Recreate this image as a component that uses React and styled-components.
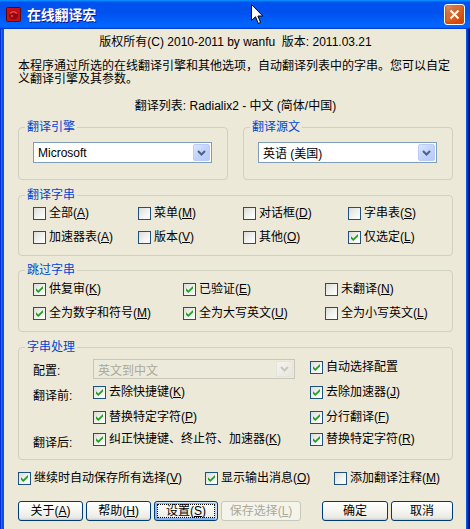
import React from 'react'
import styled, { createGlobalStyle } from 'styled-components'

const GlobalStyle = createGlobalStyle`
  html, body {
    margin: 0;
    padding: 0;
    background: #ECE9D8;
  }
  body {
    font-family: "Liberation Sans", "Noto Sans CJK SC", sans-serif;
    font-size: 12px;
    color: #000;
  }
`

const Window = styled.div`
  position: relative;
  width: 470px;
  height: 529px;
  box-sizing: border-box;
  display: flex;
  flex-direction: column;
  overflow: hidden;
  background: #0855DD;
  box-shadow: inset 1px 0 #0831D9, inset 2px 0 #166AEE, inset 3px 0 #0855DD,
    inset -1px 0 #00138C, inset -2px 0 #001EA0, inset -3px 0 #003BDA;
`

const TitleBar = styled.div`
  flex: none;
  height: 29px;
  display: flex;
  align-items: center;
  gap: 6px;
  padding: 0 5px 0 6px;
  background: linear-gradient(180deg, #0997FF, #0053EE 8%, #0050EE 40%, #0066FF 88%, #0066FF 93%, #005BFF 95%, #003DD7 96%, #003DD7);
`

const Title = styled.span`
  flex: 1;
  color: #fff;
  font-weight: bold;
  font-size: 14px;
  letter-spacing: -0.2px;
  text-shadow: 1px 1px #0F1089;
  line-height: 16px;
`

const CloseButton = styled.span`
  width: 21px;
  height: 21px;
  box-sizing: border-box;
  border: 1px solid #fff;
  border-radius: 3px;
  display: flex;
  align-items: center;
  justify-content: center;
  background: radial-gradient(circle at 90% 90%, #CC4600 0%, #DC6527 55%, #CD7546 70%, #E5A07E 100%);
  box-shadow: inset 0 -1px 2px 1px #DA4600;
`

const Body = styled.div`
  flex: 1;
  margin: 0 4px;
  padding: 6px 13px 0 14px;
  background: #ECE9D8;
`

const Centered = styled.div`
  text-align: center;
  line-height: 14px;
  margin-top: ${p => p.$mt || 0}px;
  white-space: pre;
`

const Para = styled.p`
  margin: 11px 0 0;
  line-height: 13px;
`

const Group = styled.div`
  position: relative;
  border: 1px solid #D0D0BF;
  border-radius: 4px;
  margin-top: ${p => p.$mt || 0}px;
  padding: ${p => p.$pad};
`

const Legend = styled.span`
  position: absolute;
  left: 6px;
  top: -8px;
  padding: 0 2px;
  line-height: 14px;
  color: #0046D5;
  background: #ECE9D8;
`

const EngineRow = styled.div`
  display: grid;
  grid-template-columns: 210px 210px;
  column-gap: 15px;
  margin-top: 14px;
`

const CheckGrid = styled.div`
  display: grid;
  grid-template-columns: ${p => p.$cols};
  row-gap: 8px;
`

const ProcGrid = styled.div`
  display: grid;
  grid-template-columns: 60px 217px 1fr;
  grid-template-rows: 25px 25px 22px 20px;
  & > * {
    height: 20px;
    align-self: start;
  }
`

const RowLabel = styled.span`
  display: flex;
  align-items: center;
`

const CheckRow = styled.label`
  display: flex;
  align-items: center;
  gap: 3px;
  height: 16px;
  white-space: nowrap;
  line-height: 14px;
`

const Box = styled.span`
  flex: none;
  width: 13px;
  height: 13px;
  box-sizing: border-box;
  border: 1px solid #1C5180;
  background: linear-gradient(135deg, #DCDCD7 0%, #F4F4F2 60%, #FFFFFF 100%);
  display: flex;
  align-items: center;
  justify-content: center;
`

const ComboBox = styled.div`
  width: ${p => p.$w}px;
  height: ${p => p.$h || 21}px;
  box-sizing: border-box;
  display: flex;
  align-items: stretch;
  padding: 1px;
  border: 1px solid ${p => (p.$disabled ? '#C9C7BA' : '#7F9DB9')};
  background: ${p => (p.$disabled ? '#EBEADB' : '#fff')};
  color: ${p => (p.$disabled ? '#ACA899' : '#000')};
`

const ComboText = styled.span`
  flex: 1;
  display: flex;
  align-items: center;
  padding-left: 3px;
`

const DropButton = styled.span`
  width: 17px;
  box-sizing: border-box;
  border-radius: 2px;
  display: flex;
  align-items: center;
  justify-content: center;
  border: 1px solid ${p => (p.$disabled ? '#E6E4DA' : '#BACDF8')};
  background: ${p =>
    p.$disabled
      ? 'linear-gradient(135deg, #F4F3EE, #E8E6DD)'
      : 'linear-gradient(135deg, #DCE6FD 0%, #C3D3FD 50%, #B7C9F7 100%)'};
`

const BottomChecks = styled.div`
  display: grid;
  grid-template-columns: 187px 129px 1fr;
  margin-top: 10px;
`

const ButtonBar = styled.div`
  display: flex;
  gap: 3px;
  margin-top: 15px;
`

const Button = styled.button`
  width: ${p => p.$w}px;
  height: 20px;
  box-sizing: border-box;
  margin-left: ${p => p.$ml || 0}px;
  padding: 0;
  font: inherit;
  line-height: 14px;
  color: #000;
  border: 1px solid #003C74;
  border-radius: 3px;
  background: linear-gradient(180deg, #FFFFFF 0%, #F7F7F4 40%, #ECEBE6 85%, #D6D0C5 100%);
  box-shadow: inset 0 -1px #D6D0C5;
  &[data-focus] {
    box-shadow: inset -1px 1px #CEE7FF, inset 1px 2px #98B8EA, inset -2px 2px #BCD4F6,
      inset 1px -1px #89ADE4, inset 2px -2px #89ADE4;
    outline: 1px dotted #000;
    outline-offset: -4px;
  }
  &:disabled {
    color: #ACA899;
    border-color: #C9C7BA;
    background: #F5F4EA;
    box-shadow: none;
  }
`

const Cursor = styled.svg`
  position: absolute;
  left: 251px;
  top: 4px;
`

const Tick = () => (
  <svg width="7" height="7" viewBox="0 0 7 7">
    <polygon points="0,2.2 2.3,4.4 7,0 7,2.6 2.3,7 0,4.8" fill="#21A121" />
  </svg>
)

const Check = ({ checked, children }) => (
  <CheckRow>
    <Box>{checked && <Tick />}</Box>
    <span>{children}</span>
  </CheckRow>
)

const Chevron = ({ color }) => (
  <svg width="9" height="6" viewBox="0 0 9 6">
    <path d="M1 1 L4.5 4.5 L8 1" fill="none" stroke={color} strokeWidth="2" />
  </svg>
)

const Combo = ({ w, h, disabled, children }) => (
  <ComboBox $w={w} $h={h} $disabled={disabled}>
    <ComboText>{children}</ComboText>
    <DropButton $disabled={disabled}>
      <Chevron color={disabled ? '#C9C7BA' : '#4D6185'} />
    </DropButton>
  </ComboBox>
)

const Key = ({ label, k }) => (
  <>
    {label}(<u>{k}</u>)
  </>
)

const AppIcon = () => (
  <svg width="15" height="15" viewBox="0 0 15 15">
    <rect x="0.5" y="0.5" width="14" height="14" rx="1" fill="#C4101A" stroke="#5A0408" />
    <circle cx="7.5" cy="8" r="4.6" fill="#8E0A10" />
    <path d="M4 6.5 Q7.5 3 11 6.5" stroke="#F04848" strokeWidth="1.4" fill="none" />
    <circle cx="6" cy="9" r="1.3" fill="#E83030" />
  </svg>
)

export default function App() {
  return (
    <>
      <GlobalStyle />
      <Window>
        <TitleBar>
          <AppIcon />
          <Title>在线翻译宏</Title>
          <CloseButton>
            <svg width="11" height="11" viewBox="0 0 11 11">
              <path d="M1.5 1.5 L9.5 9.5 M9.5 1.5 L1.5 9.5" stroke="#fff" strokeWidth="2" />
            </svg>
          </CloseButton>
        </TitleBar>
        <Body>
          <Centered>版权所有(C) 2010-2011 by wanfu  版本: 2011.03.21</Centered>
          <Para>本程序通过所选的在线翻译引擎和其他选项，自动翻译列表中的字串。您可以自定义翻译引擎及其参数。</Para>
          <Centered $mt={13}>翻译列表: Radialix2 - 中文 (简体/中国)</Centered>

          <EngineRow>
            <Group $pad="14px 15px 16px 14px">
              <Legend>翻译引擎</Legend>
              <Combo w={179}>Microsoft</Combo>
            </Group>
            <Group $pad="14px 15px 16px 14px">
              <Legend>翻译源文</Legend>
              <Combo w={179}>英语 (美国)</Combo>
            </Group>
          </EngineRow>

          <Group $mt={15} $pad="9px 0 10px 14px">
            <Legend>翻译字串</Legend>
            <CheckGrid $cols="repeat(4, 105px)">
              <Check><Key label="全部" k="A" /></Check>
              <Check><Key label="菜单" k="M" /></Check>
              <Check><Key label="对话框" k="D" /></Check>
              <Check><Key label="字串表" k="S" /></Check>
              <Check><Key label="加速器表" k="A" /></Check>
              <Check><Key label="版本" k="V" /></Check>
              <Check><Key label="其他" k="O" /></Check>
              <Check checked><Key label="仅选定" k="L" /></Check>
            </CheckGrid>
          </Group>

          <Group $mt={14} $pad="10px 0 10px 14px">
            <Legend>跳过字串</Legend>
            <CheckGrid $cols="150px 142px 1fr">
              <Check checked><Key label="供复审" k="K" /></Check>
              <Check checked><Key label="已验证" k="E" /></Check>
              <Check><Key label="未翻译" k="N" /></Check>
              <Check checked><Key label="全为数字和符号" k="M" /></Check>
              <Check checked><Key label="全为大写英文" k="U" /></Check>
              <Check><Key label="全为小写英文" k="L" /></Check>
            </CheckGrid>
          </Group>

          <Group $mt={15} $pad="11px 0 8px 14px">
            <Legend>字串处理</Legend>
            <ProcGrid>
              <RowLabel>配置:</RowLabel>
              <Combo w={202} h={20} disabled>英文到中文</Combo>
              <Check checked>自动选择配置</Check>
              <RowLabel>翻译前:</RowLabel>
              <Check checked><Key label="去除快捷键" k="K" /></Check>
              <Check checked><Key label="去除加速器" k="J" /></Check>
              <span />
              <Check checked><Key label="替换特定字符" k="P" /></Check>
              <Check checked><Key label="分行翻译" k="F" /></Check>
              <RowLabel>翻译后:</RowLabel>
              <Check checked><Key label="纠正快捷键、终止符、加速器" k="K" /></Check>
              <Check checked><Key label="替换特定字符" k="R" /></Check>
            </ProcGrid>
          </Group>

          <BottomChecks>
            <Check checked><Key label="继续时自动保存所有选择" k="V" /></Check>
            <Check checked><Key label="显示输出消息" k="O" /></Check>
            <Check><Key label="添加翻译注释" k="M" /></Check>
          </BottomChecks>

          <ButtonBar>
            <Button $w={66}><Key label="关于" k="A" /></Button>
            <Button $w={66}><Key label="帮助" k="H" /></Button>
            <Button $w={65} data-focus><Key label="设置" k="S" /></Button>
            <Button $w={81} disabled><Key label="保存选择" k="L" /></Button>
            <Button $w={67} $ml={18}>确定</Button>
            <Button $w={63}>取消</Button>
          </ButtonBar>
        </Body>
        <Cursor width="13" height="21" viewBox="0 0 13 21">
          <path d="M0.5 0.5 L0.5 16.5 L4.5 12.8 L7.3 19.5 L9.6 18.5 L6.9 12 L11.8 12 Z" fill="#fff" stroke="#000" strokeWidth="1" />
        </Cursor>
      </Window>
    </>
  )
}
